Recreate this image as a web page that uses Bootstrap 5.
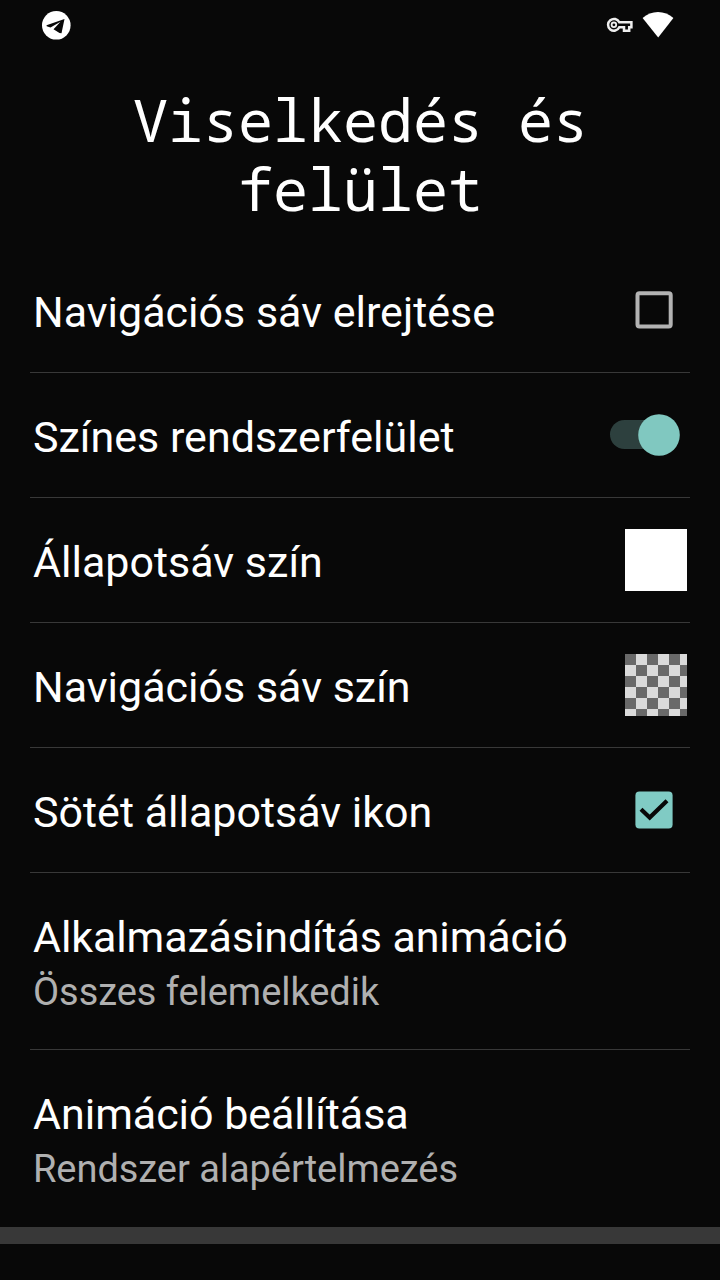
<!DOCTYPE html>
<html lang="hu">
<head>
<meta charset="utf-8">
<meta name="viewport" content="width=device-width, initial-scale=1">
<title>Viselkedés és felület</title>
<link href="https://cdn.jsdelivr.net/npm/bootstrap@5.3.0/dist/css/bootstrap.min.css" rel="stylesheet">
<style>
body{background:#080808;color:#fff;font-family:Roboto,sans-serif;overflow:hidden}
.screen{height:1280px}
.statusbar{height:50px;padding:0 46px 0 41px}
.page-title{font:400 58.33px/69px "Noto Sans Mono","DejaVu Sans Mono",monospace;padding:35px 0 0 1px;height:198px;margin:0}
.settings{margin:0 30px}
.setting{height:125px;border-bottom:1px solid #383838;padding-left:3px}
.setting.tall{height:177px;padding-top:38px}
.setting.last{border:0}
.label{font-size:43px;line-height:52px;white-space:nowrap}
.setting:not(.tall) .label{padding-top:4px}
.tall .label{letter-spacing:-.12px}
.last .label{letter-spacing:-.04px}
.sub{font-size:38px;line-height:46px;margin-top:6px;color:#b0b0b0;white-space:nowrap;letter-spacing:-.05px}
.check-icon{margin-right:16px}
.toggle-icon{margin-right:9px}
.swatch{width:62px;height:62px;margin-right:3px}
.checker{background:repeating-conic-gradient(#dadada 0 25%,#696969 0 50%) 0 0/22px 22px}
.strip{height:17px;background:#383838}
</style>
</head>
<body>
<main class="screen d-flex flex-column">
<header class="statusbar d-flex align-items-center justify-content-between">
<svg width="30" height="30" viewBox="0 0 30 30"><circle cx="15.3" cy="15.3" r="14.3" fill="#fff"/><path d="M5.5 15.2L23.5 9L20.5 23.2L18.5 23L12.5 19.2L19.5 11.8L9.5 17.4L5.7 16.2Z" fill="#080808"/></svg>
<div class="d-flex align-items-center">
<svg width="28" height="18" viewBox="0 0 28 18"><path d="M13.3 6.3A5.9 5.9 0 1 0 13.3 11.3H18V14.7H23.2V11.3H25.4V6.3Z" fill="none" stroke="#eee" stroke-width="2.5"/><circle cx="7.9" cy="8.8" r="2.3" fill="none" stroke="#eee" stroke-width="1.8"/></svg>
<svg class="ms-2" width="32" height="28" viewBox="0 0 32 28"><path d="M.6 7C9-1 23-1 31.4 7L16.2 26.5Z" fill="#fff"/></svg>
</div>
</header>
<h1 class="page-title text-center">Viselkedés és<br>felület</h1>
<section class="settings">
<div class="setting d-flex align-items-center justify-content-between"><span class="label">Navigációs sáv elrejtése</span>
<svg class="check-icon" width="40" height="40" viewBox="0 0 40 40"><rect x="3.5" y="3.3" width="33.2" height="33.2" rx="2" fill="none" stroke="#b3b3b3" stroke-width="4"/></svg></div>
<div class="setting d-flex align-items-center justify-content-between"><span class="label">Színes rendszerfelület</span>
<svg class="toggle-icon" width="72" height="44" viewBox="0 0 72 44"><rect x="1" y="7" width="56" height="29" rx="14.5" fill="#2d403e"/><circle cx="50" cy="22" r="20.8" fill="#80c8c0"/></svg></div>
<div class="setting d-flex align-items-center justify-content-between"><span class="label">Állapotsáv szín</span><span class="swatch bg-white"></span></div>
<div class="setting d-flex align-items-center justify-content-between"><span class="label">Navigációs sáv szín</span><span class="swatch checker"></span></div>
<div class="setting d-flex align-items-center justify-content-between"><span class="label">Sötét állapotsáv ikon</span>
<svg class="check-icon" width="40" height="40" viewBox="0 0 40 40"><rect x="1.4" y="1.4" width="37.2" height="37.2" rx="4" fill="#80cbc4"/><path d="M7 19.3L15.7 27.5L33 10.8" fill="none" stroke="#080808" stroke-width="4.2"/></svg></div>
<div class="setting tall d-flex flex-column"><span class="label">Alkalmazásindítás animáció</span><span class="sub">Összes felemelkedik</span></div>
<div class="setting tall last d-flex flex-column"><span class="label">Animáció beállítása</span><span class="sub">Rendszer alapértelmezés</span></div>
</section>
<div class="strip"></div>
</main>
<script src="https://cdn.jsdelivr.net/npm/bootstrap@5.3.0/dist/js/bootstrap.bundle.min.js"></script>
</body>
</html>
